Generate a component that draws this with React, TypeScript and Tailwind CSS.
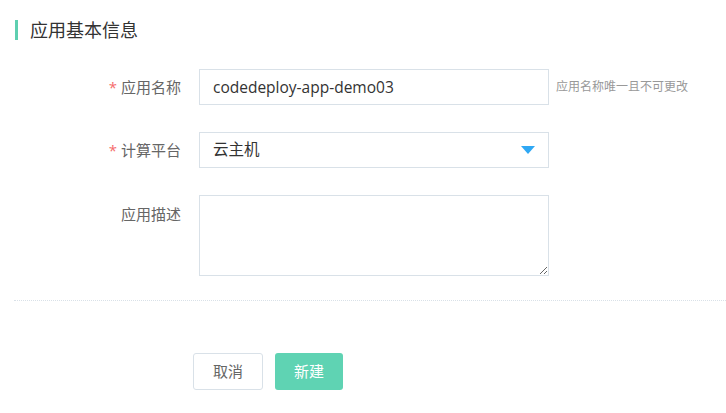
import { useState } from 'react';

export default function App() {
  const [name, setName] = useState('codedeploy-app-demo03');
  const [desc, setDesc] = useState('');

  return (
    <div
      className="w-[726px] h-[413px] bg-white overflow-hidden"
      style={{ fontFamily: '"Open Sans", "Noto Sans CJK SC", sans-serif' }}
    >
      {/* Section title */}
      <div className="flex items-center pt-[20px] pl-[15px]">
        <div className="w-[3px] h-[20px] bg-[#5ecfb0]" />
        <h2 className="ml-[12px] text-[18px] leading-[20px] text-[#333]">应用基本信息</h2>
      </div>

      <div className="mt-[29px] flex flex-col gap-[27px]">
        {/* App name */}
        <div className="flex items-center">
          <label className="w-[181px] text-right text-[15px] text-[#666]">
            <span className="text-[#f56c6c] mr-[4px]">*</span>应用名称
          </label>
          <input
            value={name}
            onChange={(e) => setName(e.target.value)}
            className="ml-[18px] w-[350px] h-[36px] px-[13px] border border-[#d9e1e8] text-[15.5px] text-[#333] outline-none"
          />
          <span className="ml-[7px] text-[12px] text-[#999]">应用名称唯一且不可更改</span>
        </div>

        {/* Platform */}
        <div className="flex items-center">
          <label className="w-[181px] text-right text-[15px] text-[#666]">
            <span className="text-[#f56c6c] mr-[4px]">*</span>计算平台
          </label>
          <div className="ml-[18px] w-[350px] h-[36px] px-[13px] border border-[#d9e1e8] flex items-center justify-between">
            <span className="text-[15.5px] text-[#333]">云主机</span>
            <svg width="14" height="8" viewBox="0 0 14 8">
              <path d="M0 0h14L7 8z" fill="#2fa8f4" />
            </svg>
          </div>
        </div>

        {/* Description */}
        <div className="flex items-start">
          <label className="w-[181px] text-right text-[15px] text-[#666] mt-[8px]">应用描述</label>
          <textarea
            value={desc}
            onChange={(e) => setDesc(e.target.value)}
            className="ml-[18px] w-[350px] h-[81px] px-[13px] py-[8px] border border-[#d9e1e8] text-[14px] outline-none"
          />
        </div>
      </div>

      <div className="mt-[24px] ml-[14px] border-t border-dotted border-[#d9e1e8]" />

      <div className="mt-[52px] ml-[193px] flex gap-[12px]">
        <button className="w-[70px] h-[37px] border border-[#d9e1e8] rounded-[3px] bg-white text-[15px] text-[#666]">
          取消
        </button>
        <button className="w-[68px] h-[37px] rounded-[3px] bg-[#5fd3b3] text-[15px] text-white">
          新建
        </button>
      </div>
    </div>
  );
}
